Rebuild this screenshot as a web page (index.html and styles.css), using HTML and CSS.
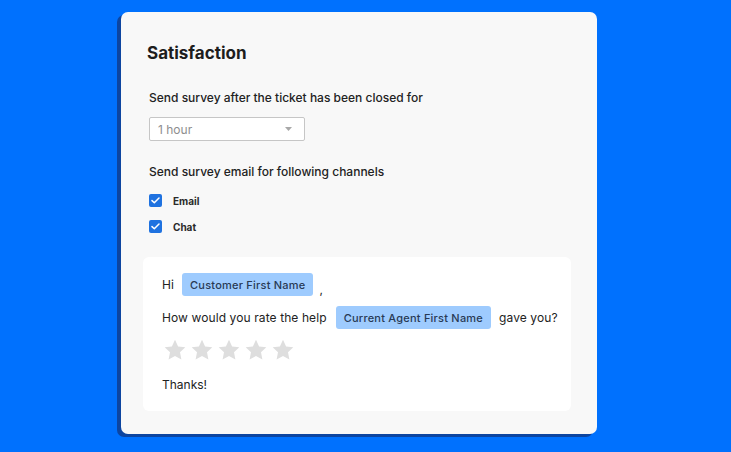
FILE: index.html
```html
<!DOCTYPE html>
<html>
<head>
<meta charset="utf-8">
<link rel="stylesheet" href="styles.css">
</head>
<body>
<div class="card">
  <h1 class="title">Satisfaction</h1>
  <div class="field">
    <div class="label">Send survey after the ticket has been closed for</div>
    <div class="select">
      <span>1 hour</span>
      <svg class="caret" width="7" height="4" viewBox="0 0 7 4"><path d="M0 0h7L3.5 4z" fill="#a8a8a8"/></svg>
    </div>
  </div>
  <div class="field channels">
    <div class="label">Send survey email for following channels</div>
    <div class="check">
      <span class="box"><svg width="9" height="7" viewBox="0 0 9 7"><path d="M1 3.6l2.3 2.1L8 1" fill="none" stroke="#fff" stroke-width="1.5" stroke-linecap="round" stroke-linejoin="round"/></svg></span>
      <span class="check-label">Email</span>
    </div>
    <div class="check">
      <span class="box"><svg width="9" height="7" viewBox="0 0 9 7"><path d="M1 3.6l2.3 2.1L8 1" fill="none" stroke="#fff" stroke-width="1.5" stroke-linecap="round" stroke-linejoin="round"/></svg></span>
      <span class="check-label">Chat</span>
    </div>
  </div>
  <div class="preview">
    <div class="line line-hi">
      <span>Hi</span>
      <span class="chip">Customer First Name</span>
      <span class="comma">,</span>
    </div>
    <div class="line line-q">
      <span>How would you rate the help</span>
      <span class="chip">Current Agent First Name</span>
      <span>gave you?</span>
    </div>
    <div class="stars">
      <svg viewBox="0 0 24 24"><path d="M12 1.8l3.1 6.6 7.2.9-5.3 5 1.4 7.1L12 17.9l-6.4 3.5L7 14.3l-5.3-5 7.2-.9z"/></svg>
      <svg viewBox="0 0 24 24"><path d="M12 1.8l3.1 6.6 7.2.9-5.3 5 1.4 7.1L12 17.9l-6.4 3.5L7 14.3l-5.3-5 7.2-.9z"/></svg>
      <svg viewBox="0 0 24 24"><path d="M12 1.8l3.1 6.6 7.2.9-5.3 5 1.4 7.1L12 17.9l-6.4 3.5L7 14.3l-5.3-5 7.2-.9z"/></svg>
      <svg viewBox="0 0 24 24"><path d="M12 1.8l3.1 6.6 7.2.9-5.3 5 1.4 7.1L12 17.9l-6.4 3.5L7 14.3l-5.3-5 7.2-.9z"/></svg>
      <svg viewBox="0 0 24 24"><path d="M12 1.8l3.1 6.6 7.2.9-5.3 5 1.4 7.1L12 17.9l-6.4 3.5L7 14.3l-5.3-5 7.2-.9z"/></svg>
    </div>
    <div class="thanks">Thanks!</div>
  </div>
</div>
</body>
</html>
```
FILE: styles.css
```css
html, body {
  margin: 0;
  padding: 0;
}
body {
  background: #0071fe;
  font-family: Inter, "Noto Sans", sans-serif;
  color: #222;
  width: 731px;
  height: 452px;
  overflow: hidden;
}
.card {
  box-sizing: border-box;
  margin: 12px 0 0 121px;
  width: 476px;
  height: 422px;
  background: #f8f8f8;
  border-radius: 7px;
  box-shadow: -4px 3px 0 #0d45a0;
  padding: 30px 26px 0 22px;
}
.title {
  margin: 0 0 0 4px;
  font-size: 17px;
  font-weight: 700;
  line-height: 22px;
  color: #1d1d1d;
}
.field {
  margin: 26px 0 0 6px;
}
.label {
  font-size: 12px;
  font-weight: 500;
  line-height: 16px;
  color: #222;
}
.select {
  margin-top: 11px;
  box-sizing: border-box;
  width: 156px;
  height: 24px;
  border: 1px solid #c6c6c6;
  border-radius: 2px;
  background: #fff;
  display: flex;
  align-items: center;
  justify-content: space-between;
  padding: 0 12px 0 8px;
  font-size: 12px;
  color: #8e8e8e;
}
.caret {
  display: block;
}
.channels {
  margin-top: 23px;
}
.check {
  display: flex;
  align-items: center;
  gap: 11px;
  height: 13px;
  margin-top: 13px;
}
.channels .label + .check {
  margin-top: 14px;
}
.box {
  width: 13px;
  height: 13px;
  border-radius: 2px;
  background: #1f72e0;
  display: flex;
  align-items: center;
  justify-content: center;
}
.box svg {
  display: block;
}
.check-label {
  font-size: 10px;
  font-weight: 700;
  color: #2a2a2a;
}
.preview {
  margin-top: 24px;
  box-sizing: border-box;
  height: 154px;
  background: #fff;
  border-radius: 6px;
  padding: 16px 19px 0 19px;
}
.line {
  display: flex;
  align-items: center;
  gap: 8px;
  font-size: 12px;
  line-height: 16px;
  letter-spacing: 0.1px;
  color: #222;
  white-space: nowrap;
}
.line > span {
  flex-shrink: 0;
}
.line-q {
  margin-top: 10px;
}
.chip {
  background: #9ecbfe;
  border-radius: 3px;
  padding: 0 8px;
  height: 23px;
  display: flex;
  align-items: center;
  font-size: 11px;
  font-weight: 500;
  letter-spacing: 0.22px;
  color: #283a55;
}
.line-q .chip {
  margin-left: 1px;
}
.comma {
  align-self: flex-end;
  line-height: 12px;
  margin-left: -2px;
}
.stars {
  display: flex;
  gap: 3px;
  margin-top: 9px;
  margin-left: 1px;
}
.stars svg {
  width: 24px;
  height: 24px;
  fill: #dedede;
}
.thanks {
  margin-top: 15px;
  font-size: 12px;
  line-height: 16px;
  color: #222;
}
```
